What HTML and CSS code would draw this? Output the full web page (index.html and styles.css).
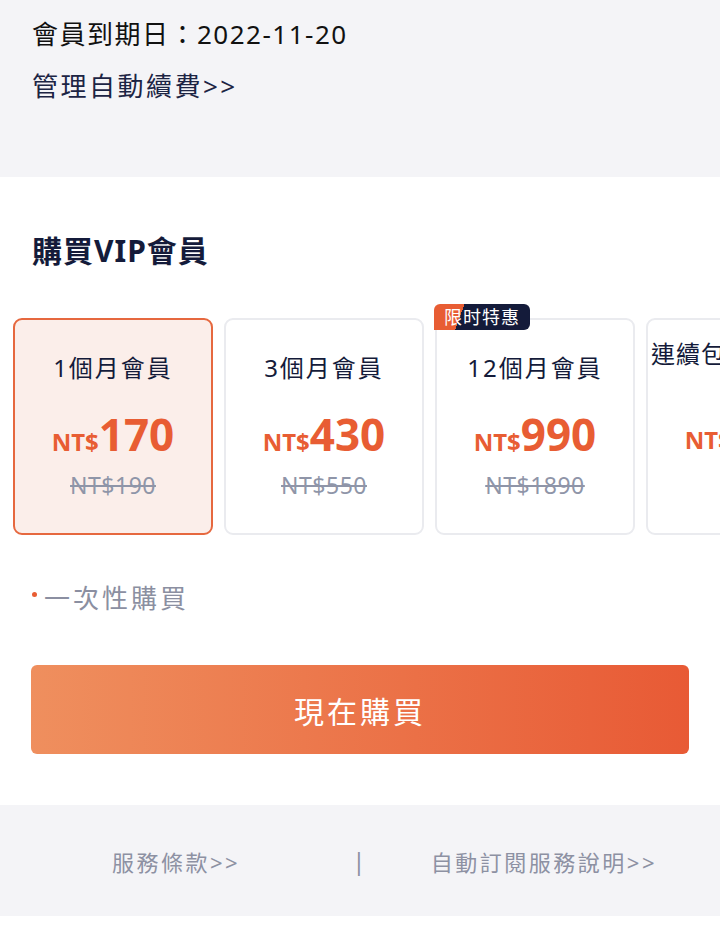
FILE: index.html
```html
<!DOCTYPE html>
<html lang="zh-Hant">

<head>
  <meta charset="UTF-8">
  <meta name="viewport" content="width=device-width, initial-scale=1.0">
  <title>購買VIP會員</title>
  <link rel="stylesheet" href="styles.css">
</head>

<body>
  <div id="member-info">
    <p class="expire">會員到期日：2022-11-20</p>
    <p class="manage">管理自動續費&gt;&gt;</p>
  </div>

  <div id="purchase">
    <h2>購買VIP會員</h2>

    <div class="plans">
      <div class="plan active">
        <p class="plan-name">1個月會員</p>
        <p class="price"><span class="cur">NT$</span>170</p>
        <p class="old-price">NT$190</p>
      </div>
      <div class="plan">
        <p class="plan-name">3個月會員</p>
        <p class="price"><span class="cur">NT$</span>430</p>
        <p class="old-price">NT$550</p>
      </div>
      <div class="plan">
        <span class="badge">限时特惠</span>
        <p class="plan-name">12個月會員</p>
        <p class="price"><span class="cur">NT$</span>990</p>
        <p class="old-price">NT$1890</p>
      </div>
      <div class="plan wrap">
        <p class="plan-name">連續包月VIP會員</p>
        <p class="price"><span class="cur">NT$</span>150</p>
      </div>
    </div>

    <p class="note">一次性購買</p>

    <button type="button" class="buy">現在購買</button>
  </div>

  <div id="footer-links">
    <a class="link">服務條款&gt;&gt;</a>
    <span class="sep">|</span>
    <a class="link">自動訂閱服務說明&gt;&gt;</a>
  </div>
</body>

</html>
```

FILE: styles.css
```css
body {
  margin: 0;
  background-color: #fff;
  font-family: 'Noto Sans', 'Noto Sans CJK TC', sans-serif;
  color: #111;
  width: 720px;
  overflow: hidden;
}

p {
  margin: 0;
}

#member-info {
  background-color: #f4f4f7;
  padding: 14px 32px 0;
  height: 163px;
}

.expire {
  font-size: 26px;
  line-height: 40px;
  letter-spacing: 1.5px;
  color: #111;
}

.manage {
  font-size: 26px;
  line-height: 40px;
  letter-spacing: 2.5px;
  margin-top: 12px;
  color: #1c2444;
}

#purchase {
  padding: 50px 0 51px;
}

h2 {
  margin: 0 0 0 32px;
  font-size: 30px;
  line-height: 48px;
  font-weight: 700;
  letter-spacing: 1px;
  color: #141b3a;
}

.plans {
  display: flex;
  gap: 11px;
  padding: 43px 0 0 13px;
  overflow: hidden;
}

.plan {
  position: relative;
  flex: 0 0 200px;
  height: 217px;
  box-sizing: border-box;
  border: 2px solid #eaebef;
  border-radius: 9px;
  background-color: #fff;
  text-align: center;
  padding-top: 30px;
}

.plan.active {
  background-color: #fbeeea;
  border-color: #e6683f;
}

.plan-name {
  font-size: 24px;
  line-height: 36px;
  letter-spacing: 2px;
  color: #141b3a;
}

.plan.wrap {
  padding-top: 16px;
}

.plan.wrap .plan-name {
  white-space: nowrap;
  letter-spacing: 1px;
}

.plan.wrap .price {
  margin-top: 36px;
}

.price {
  margin-top: 24px;
  font-size: 44px;
  line-height: 48px;
  font-weight: 700;
  color: #e85d33;
}

.cur {
  font-size: 24px;
}

.old-price {
  margin-top: 4px;
  font-size: 23px;
  line-height: 30px;
  letter-spacing: 0.5px;
  color: #8f95a8;
  text-decoration: line-through;
}

.badge {
  position: absolute;
  top: -16px;
  left: -3px;
  padding: 0 10px;
  font-size: 18px;
  line-height: 26px;
  letter-spacing: 1px;
  color: #fff;
  border-radius: 6px 6px 6px 0;
  background: linear-gradient(110deg, #e85d33 0 29%, #141b3a 29% 100%);
}

.note {
  margin: 44px 0 0 32px;
  font-size: 26px;
  line-height: 38px;
  letter-spacing: 3px;
  color: #8b8fa1;
  display: flex;
  align-items: center;
}

.note::before {
  content: "";
  width: 5px;
  height: 5px;
  border-radius: 50%;
  background-color: #e85d33;
  margin-right: 7px;
  margin-top: -8px;
}

.buy {
  display: block;
  margin: 48px 0 0 31px;
  width: 658px;
  height: 89px;
  border: none;
  border-radius: 6px;
  background: linear-gradient(90deg, #ef8f5e, #e85a35);
  color: #fff;
  font-family: inherit;
  font-size: 30px;
  letter-spacing: 3px;
  cursor: pointer;
}

#footer-links {
  background-color: #f4f4f7;
  height: 111px;
  display: flex;
  align-items: center;
  font-size: 22px;
  letter-spacing: 2.5px;
  color: #8d91a3;
}

.link {
  flex: 1;
  text-align: center;
}

.sep {
  color: #8d91a3;
  font-size: 24px;
}
```
